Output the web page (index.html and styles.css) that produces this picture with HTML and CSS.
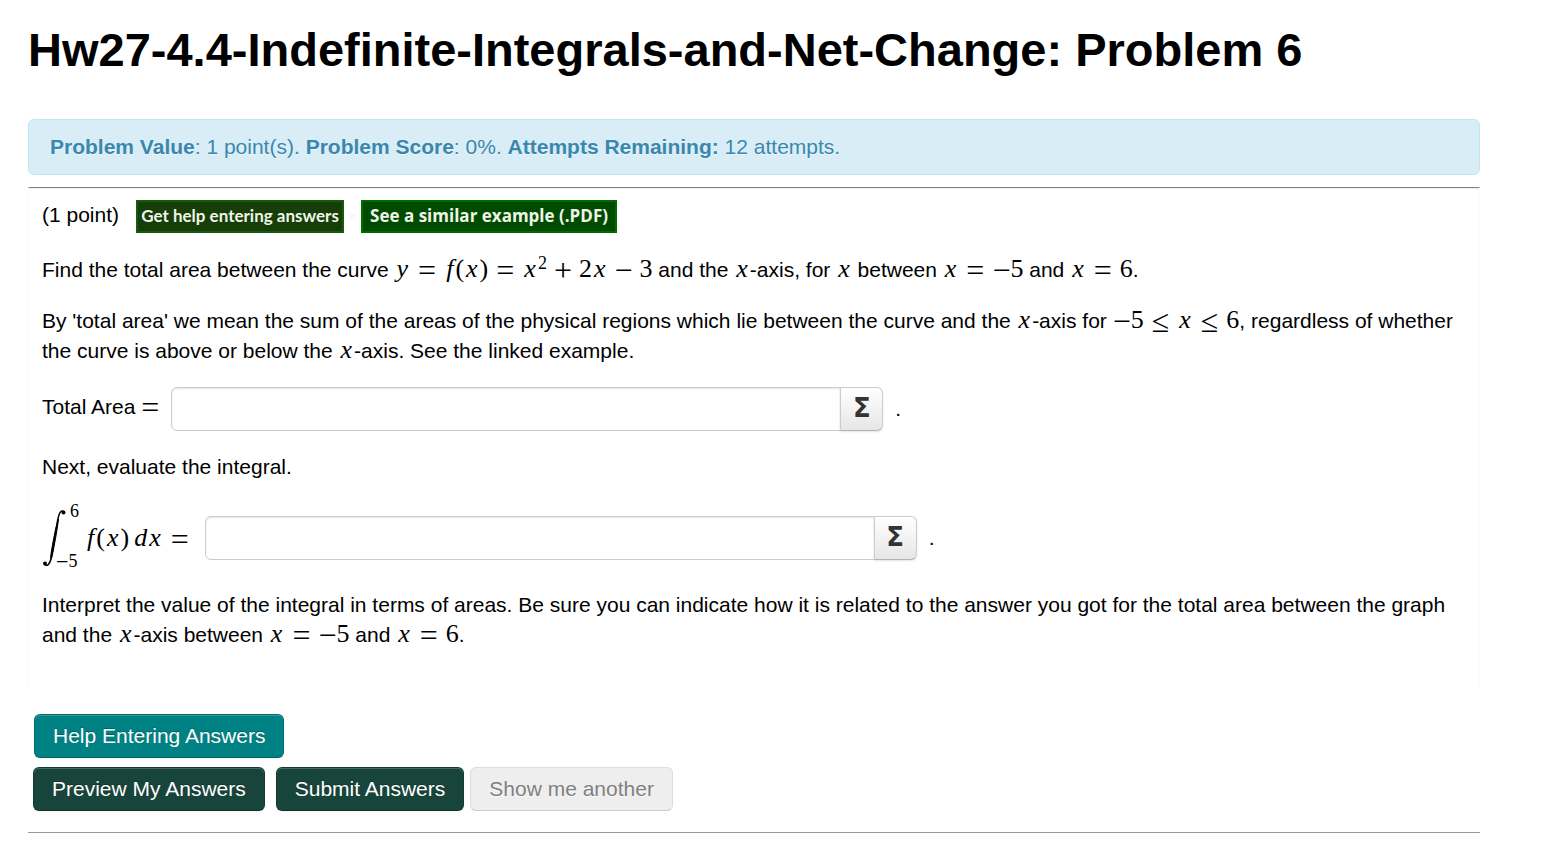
FILE: index.html
```
<!DOCTYPE html>
<html lang="en">
<head>
    <meta charset="UTF-8">
    <meta name="viewport" content="width=device-width, initial-scale=1.0">
    <title>Hw27-4.4-Indefinite-Integrals-and-Net-Change: Problem 6</title>
    <link rel="stylesheet" href="styles.css">
</head>
<body>
    <h1>Hw27-4.4-Indefinite-Integrals-and-Net-Change: Problem 6</h1>

    <div class="alert-info">
        <b>Problem Value</b>: 1 point(s). <b>Problem Score</b>: 0%. <b>Attempts Remaining:</b> 12 attempts.
    </div>

    <form id="problem-form" action="#" method="post">
        <div class="problem-content">
            <div class="point-row">
                <span class="points">(1 point)</span>
                <a href="#" class="badge badge-help">Get help entering answers</a>
                <span class="dot"></span>
                <a href="#" class="badge badge-pdf">See a similar example (.PDF)</a>
            </div>

            <p>Find the total area between the curve <span class="math"><i>y</i><span class="rel">=</span><i class="fn">f</i>(<i>x</i>)<span class="rel">=</span><i>x</i><sup>2</sup><span class="bin">+</span>2<i>x</i><span class="bin">−</span>3</span> and the <span class="math"><i>x</i></span>-axis, for <span class="math"><i>x</i></span> between <span class="math"><i>x</i><span class="rel">=</span><span class="op">−</span>5</span> and <span class="math"><i>x</i><span class="rel">=</span>6</span>.</p>

            <p>By 'total area' we mean the sum of the areas of the physical regions which lie between the curve and the <span class="math"><i>x</i></span>-axis for <span class="math"><span class="op">−</span>5<span class="rel">≤</span><i>x</i><span class="rel">≤</span>6</span>, regardless of whether the curve is above or below the <span class="math"><i>x</i></span>-axis. See the linked example.</p>

            <div class="answer-row">
                <label for="total-area" class="area-label">Total Area <span class="math"><span class="op">=</span></span></label>
                <div class="answer-input">
                    <input type="text" id="total-area" name="total-area">
                    <button type="button" aria-label="Equation editor">Σ</button>
                </div>
                <span class="period">.</span>
            </div>

            <p class="next">Next, evaluate the integral.</p>

            <div class="answer-row integral-row">
                <label for="integral" class="integral-label">
                    <svg class="integral-sign" width="24" height="58" viewBox="0 0 24 58" aria-hidden="true">
                        <path d="M2.500 55C5 58.500 8 55 9.500 48L15.500 12C17 4 19 0 22 3" fill="none" stroke="#000" stroke-width="1.500"/>
                        <path d="M9.500 49C11 45 16 16 16.500 10C14 15 9 43 8.500 49Z" fill="#000" stroke="#000" stroke-width="1"/>
                        <circle cx="3" cy="54.500" r="2"/>
                        <circle cx="21.500" cy="3.500" r="2"/>
                    </svg>
                    <span class="limits"><span class="upper">6</span><span class="lower"><span class="op">−</span>5</span></span>
                    <span class="math"><i class="fn">f</i>(<i>x</i>)<i class="diff">d</i><i>x</i><span class="rel">=</span></span>
                </label>
                <div class="answer-input">
                    <input type="text" id="integral" name="integral">
                    <button type="button" aria-label="Equation editor">Σ</button>
                </div>
                <span class="period">.</span>
            </div>

            <p>Interpret the value of the integral in terms of areas. Be sure you can indicate how it is related to the answer you got for the total area between the graph and the <span class="math"><i>x</i></span>-axis between <span class="math"><i>x</i><span class="rel">=</span><span class="op">−</span>5</span> and <span class="math"><i>x</i><span class="rel">=</span>6</span>.</p>
        </div>

        <div class="help-row">
            <button type="button" class="btn btn-help">Help Entering Answers</button>
        </div>
        <div class="submit-row">
            <button type="submit" class="btn btn-primary">Preview My Answers</button>
            <button type="submit" class="btn btn-primary">Submit Answers</button>
            <button type="button" class="btn btn-another" disabled>Show me another</button>
        </div>
    </form>
    <hr>
</body>
</html>
```
FILE: styles.css
```
body {
    font-family: "Liberation Sans", Arial, sans-serif;
    font-size: 21px;
    line-height: 30px;
    color: #000;
    background-color: #fff;
    margin: 0 80px 0 28px;
}

h1 {
    font-size: 47px;
    line-height: 60px;
    margin: 0;
    padding: 20px 0 39px;
}

.alert-info {
    background-color: #d9edf7;
    border: 1px solid #bce8f1;
    border-radius: 6px;
    color: #3a87ad;
    padding: 12px 21px;
    margin-bottom: 12px;
    text-shadow: 0 1px 0 rgba(255, 255, 255, 0.5);
}

.problem-content {
    border: 1px solid #fafafa;
    border-top: 1px solid #808080;
    border-bottom: 0;
    box-shadow: inset 0 1px 1px #eee;
    padding: 12px 13px 14px;
}

.problem-content p {
    margin: 0 0 21px;
}

.point-row {
    display: flex;
    align-items: center;
    height: 33px;
    margin-bottom: 22px;
}

.points {
    padding-bottom: 4px;
}

.badge {
    box-sizing: border-box;
    height: 33px;
    line-height: 28px;
    border: 2px solid #006400;
    color: #eef5e8;
    font-weight: bold;
    text-align: center;
    text-decoration: none;
    white-space: nowrap;
}

.badge-help {
    width: 208px;
    margin-left: 17px;
    background-color: #173d08;
    border-color: #155c0c;
    font-family: Lato, sans-serif;
    font-size: 17px;
}

.badge-pdf {
    width: 256px;
    background-color: #004b00;
    border-color: #006c00;
    font-family: "Open Sans", sans-serif;
    font-size: 17px;
}

.dot {
    width: 5px;
    height: 5px;
    margin: 0 6px;
    background-color: #f7f7f7;
}

/* inline formulas */
.math {
    font-family: "Liberation Serif", "Times New Roman", serif;
    font-size: 26px;
    line-height: 20px;
    white-space: nowrap;
}

.math i {
    padding: 0 2px;
}

.math sup {
    font-size: 18px;
    line-height: 0;
    vertical-align: 8px;
}

.rel,
.bin,
.op {
    font-size: 32px;
    line-height: 0;
    vertical-align: -4px;
}

.rel {
    margin: 0 8px;
}

.bin {
    margin: 0 7px;
}

.math .diff {
    margin-left: 3px;
    padding-right: 0;
}

.answer-row {
    display: flex;
    align-items: center;
    height: 44px;
}

.area-label {
    padding-bottom: 4px;
}

.answer-input {
    display: flex;
    width: 712px;
    height: 44px;
    margin-left: 12px;
}

.answer-input input {
    box-sizing: border-box;
    flex: 1;
    min-width: 0;
    border: 1px solid #ccc;
    border-radius: 6px 0 0 6px;
    box-shadow: inset 0 1px 2px rgba(0, 0, 0, 0.1);
    padding: 6px 9px;
    font: inherit;
}

.answer-input button {
    width: 43px;
    margin-left: -1px;
    padding: 0 0 2px;
    border: 1px solid #ccc;
    border-bottom-color: #b3b3b3;
    border-radius: 0 6px 6px 0;
    background-image: linear-gradient(#fff, #e6e6e6);
    box-shadow: 0 1px 2px rgba(0, 0, 0, 0.1);
    color: #333;
    font-family: "DejaVu Sans", sans-serif;
    font-size: 26px;
    font-weight: bold;
    line-height: 30px;
}

.period {
    margin-left: 12px;
}

.problem-content .next {
    margin: 21px 0 20px;
}

.integral-row {
    height: 72px;
    margin-bottom: 16px;
}

.integral-label {
    display: flex;
    align-items: center;
}

.limits {
    display: flex;
    flex-direction: column;
    justify-content: space-between;
    height: 70px;
    padding-bottom: 4px;
    font-family: "Liberation Serif", "Times New Roman", serif;
    font-size: 18px;
    line-height: 20px;
}

.limits .upper {
    margin-left: 4px;
}

.limits .lower {
    margin-left: -10px;
}

.limits .op {
    font-size: 22px;
    vertical-align: -2px;
}

.integral-label .math {
    margin: 0 4px 0 6px;
}

.integral-label .rel {
    margin-right: 0;
}

.help-row {
    margin: 29px 0 9px 6px;
}

.submit-row {
    display: flex;
    margin-left: 5px;
}

.btn {
    display: block;
    height: 44px;
    padding: 0 18px;
    border: 1px solid rgba(0, 0, 0, 0.15);
    border-bottom-color: rgba(0, 0, 0, 0.25);
    border-radius: 6px;
    box-shadow: inset 0 1px 0 rgba(255, 255, 255, 0.2), 0 1px 2px rgba(0, 0, 0, 0.05);
    color: #fff;
    font: inherit;
    text-shadow: 0 -1px 0 rgba(0, 0, 0, 0.25);
    white-space: nowrap;
}

.btn-help {
    background-color: #008284;
}

.btn-primary {
    background-color: #18453b;
    margin-right: 11px;
}

.btn-another {
    background-color: #eee;
    border-color: #ddd;
    border-bottom-color: #ccc;
    box-shadow: none;
    color: #808080;
    margin-left: -5px;
    text-shadow: 0 1px 1px rgba(255, 255, 255, 0.75);
}

hr {
    border: 0;
    border-top: 1px solid #999;
    margin: 21px 0 0;
}
```
